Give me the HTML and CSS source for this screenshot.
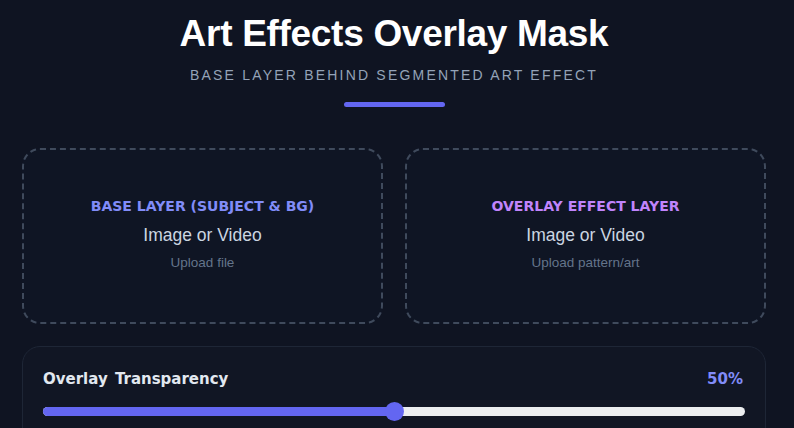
FILE: index.html
```html
<!DOCTYPE html>
<html lang="en">
<head>
<meta charset="utf-8">
<title>Art Effects Overlay Mask</title>
<link rel="stylesheet" href="styles.css">
</head>
<body>
<main class="page">
  <header class="hero">
    <h1 class="title">Art Effects Overlay Mask</h1>
    <p class="subtitle">BASE LAYER BEHIND SEGMENTED ART EFFECT</p>
    <div class="accent"></div>
  </header>
  <section class="uploads">
    <div class="drop">
      <div class="drop-label base">BASE LAYER (SUBJECT &amp; BG)</div>
      <div class="drop-type">Image or Video</div>
      <div class="drop-hint">Upload file</div>
    </div>
    <div class="drop">
      <div class="drop-label overlay">OVERLAY EFFECT LAYER</div>
      <div class="drop-type">Image or Video</div>
      <div class="drop-hint">Upload pattern/art</div>
    </div>
  </section>
  <section class="panel">
    <div class="panel-row">
      <span class="panel-label">Overlay Transparency</span>
      <span class="panel-value">50%</span>
    </div>
    <div class="slider">
      <div class="slider-fill" style="width:50%"></div>
      <div class="slider-thumb" style="left:50%"></div>
    </div>
  </section>
</main>
</body>
</html>
```
FILE: styles.css
```css
* { box-sizing: border-box; }
html, body { margin: 0; padding: 0; }
body {
  background: #0f1422;
  font-family: "Liberation Sans", Arial, sans-serif;
  color: #f1f5f9;
  overflow: hidden;
}
.page {
  padding: 12px 28px 0 22px;
  width: 794px;
}
.hero {
  display: flex;
  flex-direction: column;
  align-items: center;
}
.title {
  margin: 0;
  font-size: 37px;
  font-weight: 700;
  line-height: 44px;
  color: #ffffff;
  letter-spacing: -0.3px;
}
.subtitle {
  margin: 11px 0 0;
  font-size: 14px;
  line-height: 16px;
  letter-spacing: 2.2px;
  color: #94a3b8;
}
.accent {
  margin-top: 19px;
  width: 101px;
  height: 5px;
  border-radius: 3px;
  background: #6366f1;
}
.uploads {
  margin-top: 41px;
  display: grid;
  grid-template-columns: 1fr 1fr;
  gap: 22px;
}
.drop {
  height: 176px;
  border: 2px dashed #3f4a5c;
  border-radius: 18px;
  background: #0f1524;
  display: flex;
  flex-direction: column;
  align-items: center;
  justify-content: center;
  padding-bottom: 6px;
}
.drop-label {
  font-family: "DejaVu Sans", "Liberation Sans", sans-serif;
  font-size: 14px;
  font-weight: 700;
  line-height: 18px;
  letter-spacing: 0;
}
.drop-label.base { color: #818cf8; }
.drop-label.overlay { color: #c084fc; }
.drop-type {
  margin-top: 10px;
  font-size: 17.5px;
  line-height: 20px;
  color: #cbd5e1;
}
.drop-hint {
  margin-top: 11px;
  font-size: 13.5px;
  line-height: 14px;
  color: #64748b;
}
.panel {
  margin-top: 22px;
  height: 120px;
  border: 1px solid #1e2636;
  border-radius: 18px;
  background: #111624;
  padding: 23px 20px 0 20px;
}
.panel-row {
  display: flex;
  justify-content: space-between;
  align-items: baseline;
}
.panel-label {
  font-family: "DejaVu Sans", "Liberation Sans", sans-serif;
  font-size: 15px;
  font-weight: 700;
  color: #e2e8f0;
  word-spacing: 2px;
}
.panel-value {
  font-family: "DejaVu Sans", "Liberation Sans", sans-serif;
  font-size: 15px;
  font-weight: 700;
  color: #818cf8;
  margin-right: 2px;
}
.slider {
  position: relative;
  margin-top: 19px;
  height: 9px;
  border-radius: 5px;
  background: #eceef0;
}
.slider-fill {
  height: 100%;
  border-radius: 5px;
  background: #6366f1;
}
.slider-thumb {
  position: absolute;
  top: 50%;
  width: 19px;
  height: 19px;
  margin: -9.5px 0 0 -9.5px;
  border-radius: 50%;
  background: #6366f1;
}
```
